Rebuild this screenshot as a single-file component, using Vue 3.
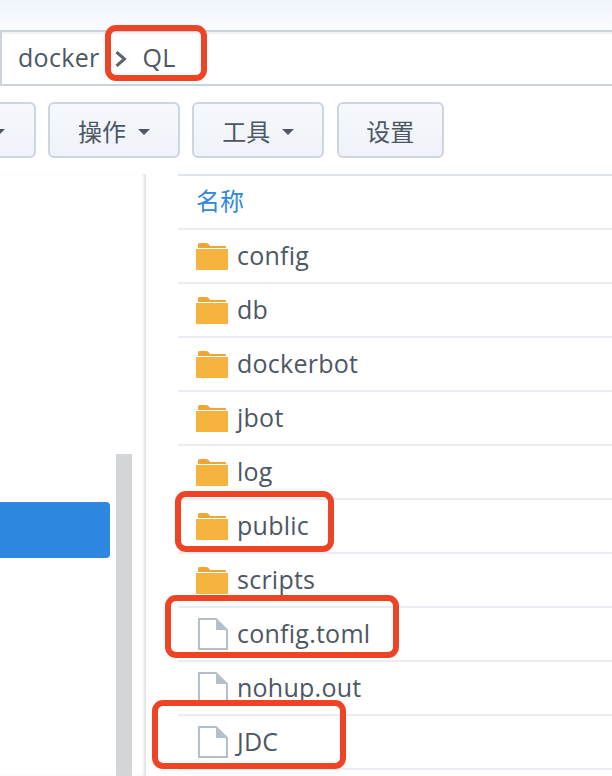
<template>
  <div class="page">
    <div class="top-strip"></div>

    <div class="path-bar">
      <span class="crumb">docker</span>
      <svg class="crumb-arrow" viewBox="0 0 12 16" fill="none" stroke="currentColor" stroke-width="3">
        <polyline points="1.5,1 9.5,8 1.5,15" />
      </svg>
      <span class="crumb current">QL</span>
    </div>

    <div class="toolbar">
      <button v-for="btn in buttons" :key="btn.label" :class="['tool-btn', btn.cls]">
        <span v-if="btn.label">{{ btn.label }}</span>
        <i v-if="btn.caret" class="caret"></i>
      </button>
    </div>

    <div class="body">
      <aside class="side">
        <div class="side-list">
          <div class="side-selected"></div>
        </div>
        <div class="side-scroll"><div class="scroll-thumb"></div></div>
      </aside>

      <section class="files">
        <div class="files-head">名称</div>
        <div v-for="file in files" :key="file.name" class="file-row">
          <svg v-if="file.folder" class="icon" viewBox="0 0 32 28">
            <path d="M2 6V2.5Q2 1 3.5 1H10.5Q12 1 13 2.5L14 4H29.5L30 5V6Z" fill="#f3a436" />
            <path d="M0 7H32V27.3Q32 28 31.3 28H.7Q0 28 0 27.3Z" fill="#f7b33f" />
          </svg>
          <svg v-else class="icon" viewBox="0 0 32 32">
            <path d="M3 1H20L31 12V31H3Z" fill="#fff" stroke="#b3c0c9" stroke-width="2" />
            <path d="M20 1L31 12H20Z" fill="#b3c0c9" />
          </svg>
          <span class="file-name">{{ file.name }}</span>
        </div>
      </section>
    </div>

    <div class="mark mark-ql"></div>
    <div class="mark mark-public"></div>
    <div class="mark mark-toml"></div>
    <div class="mark mark-jdc"></div>
  </div>
</template>

<script setup>
const buttons = [
  { label: '', caret: true, cls: 'btn-cut' },
  { label: '操作', caret: true, cls: 'btn-wide' },
  { label: '工具', caret: true, cls: 'btn-wide' },
  { label: '设置', caret: false, cls: 'btn-set' }
]

const files = [
  { name: 'config', folder: true },
  { name: 'db', folder: true },
  { name: 'dockerbot', folder: true },
  { name: 'jbot', folder: true },
  { name: 'log', folder: true },
  { name: 'public', folder: true },
  { name: 'scripts', folder: true },
  { name: 'config.toml', folder: false },
  { name: 'nohup.out', folder: false },
  { name: 'JDC', folder: false }
]
</script>

<style>
html, body {
  margin: 0;
  background: #fff;
}
</style>

<style scoped>
.page {
  position: relative;
  width: 612px;
  height: 776px;
  overflow: hidden;
  background: #fff;
  font-family: "Open Sans", "Noto Sans CJK SC", sans-serif;
  color: #4d5764;
}

.top-strip {
  height: 30px;
  background: linear-gradient(#eff4fc, #fafcfe);
}

.path-bar {
  box-sizing: border-box;
  height: 56px;
  display: flex;
  align-items: center;
  padding: 0 0 3px 16px;
  border: 2px solid #cbd4de;
  border-right: none;
  box-shadow: inset 0 2px 0 #f0f1f3;
}

.crumb {
  font-size: 25px;
  line-height: 34px;
  letter-spacing: 0.3px;
}

.crumb-arrow {
  width: 12px;
  height: 16px;
  margin: 5px 0 0 15px;
  color: #5a6470;
}

.current {
  margin-left: 16px;
}

.toolbar {
  display: flex;
  gap: 12.7px;
  margin: 16px 0 0 -39.7px;
}

.tool-btn {
  box-sizing: border-box;
  height: 56px;
  display: flex;
  align-items: center;
  justify-content: center;
  gap: 12px;
  border: 2px solid #cdd6e0;
  border-radius: 6px;
  background: linear-gradient(#f5f8fc, #eff3f9);
  color: #4d5764;
  font-family: inherit;
  font-size: 24px;
  padding: 0;
}

.btn-cut {
  width: 75.3px;
  justify-content: flex-end;
  padding-right: 29px;
}

.btn-wide {
  width: 131.5px;
}

.btn-set {
  width: 107px;
}

.caret {
  width: 0;
  height: 0;
  border-left: 6px solid transparent;
  border-right: 6px solid transparent;
  border-top: 6px solid #4d5764;
  margin-top: 3px;
}

.body {
  display: flex;
  margin-top: 16px;
}

.side {
  width: 146px;
  height: 602px;
  display: flex;
  box-shadow: inset -3px 0 3px -1px #dfe0e2;
}

.side-list {
  width: 116px;
  padding-top: 328px;
}

.side-selected {
  width: 110px;
  height: 56px;
  background: #2e88e0;
  border-radius: 0 4px 4px 0;
}

.side-scroll {
  width: 16px;
  padding-top: 280px;
}

.scroll-thumb {
  height: 322px;
  background: #d4d5d7;
}

.files {
  flex: 1;
  margin-left: 32px;
  border-top: 2px solid #dee5ec;
}

.files-head {
  box-sizing: border-box;
  height: 54px;
  padding: 10px 0 0 18px;
  font-size: 24px;
  line-height: 30px;
  color: #2e88e0;
  border-bottom: 2px solid #e9edf2;
}

.file-row {
  box-sizing: border-box;
  height: 54px;
  display: flex;
  align-items: center;
  padding-left: 18px;
  border-bottom: 2px solid #e9edf2;
}

.icon {
  width: 32px;
  height: 32px;
  flex: none;
}

.file-name {
  margin: -3px 0 0 9px;
  font-size: 25px;
  line-height: 34px;
  letter-spacing: 0.25px;
}

.mark {
  position: absolute;
  box-sizing: border-box;
  border: 6px solid #ee4425;
  border-radius: 11px;
}

.mark-ql {
  left: 105px;
  top: 25px;
  width: 102px;
  height: 56px;
}

.mark-public {
  left: 175px;
  top: 491px;
  width: 159px;
  height: 61px;
}

.mark-toml {
  left: 165px;
  top: 595px;
  width: 234px;
  height: 63px;
}

.mark-jdc {
  left: 152px;
  top: 700px;
  width: 194px;
  height: 69px;
}
</style>
